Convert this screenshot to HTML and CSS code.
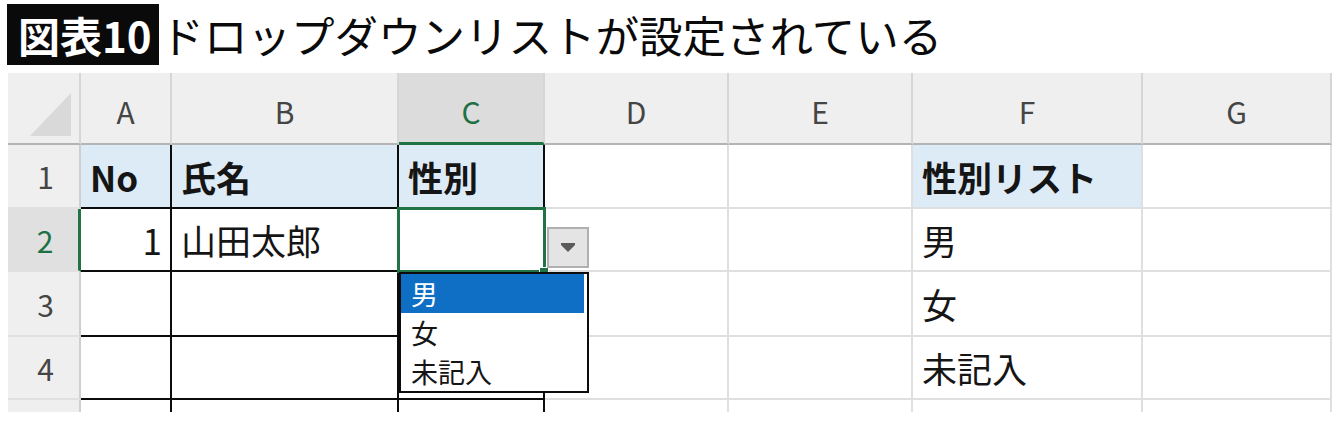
FILE: index.html
```html
<!DOCTYPE html>
<html lang="ja">
<head>
<meta charset="utf-8">
<title>図表10</title>
<link rel="stylesheet" href="styles.css">
</head>
<body>
<div class="title">
  <span class="badge">図表10</span><span class="heading">ドロップダウンリストが設定されている</span>
</div>
<div class="sheet">
  <div class="grid">
    <div class="hd corner"><span class="tri"></span></div>
    <div class="hd col">A</div>
    <div class="hd col">B</div>
    <div class="hd col sel-col">C</div>
    <div class="hd col">D</div>
    <div class="hd col">E</div>
    <div class="hd col">F</div>
    <div class="hd col">G</div>

    <div class="hd row">1</div>
    <div class="c blk blue bold">No</div>
    <div class="c blk blue bold">氏名</div>
    <div class="c blk blue bold">性別</div>
    <div class="c"></div>
    <div class="c"></div>
    <div class="c blue bold">性別リスト</div>
    <div class="c"></div>

    <div class="hd row sel-row">2</div>
    <div class="c blk num">1</div>
    <div class="c blk">山田太郎</div>
    <div class="c blk"></div>
    <div class="c"></div>
    <div class="c"></div>
    <div class="c">男</div>
    <div class="c"></div>

    <div class="hd row">3</div>
    <div class="c blk"></div>
    <div class="c blk"></div>
    <div class="c blk"></div>
    <div class="c"></div>
    <div class="c"></div>
    <div class="c">女</div>
    <div class="c"></div>

    <div class="hd row">4</div>
    <div class="c blk"></div>
    <div class="c blk"></div>
    <div class="c blk"></div>
    <div class="c"></div>
    <div class="c"></div>
    <div class="c">未記入</div>
    <div class="c"></div>

    <div class="hd row last"></div>
    <div class="c blkv last"></div>
    <div class="c blkv last"></div>
    <div class="c blkv last"></div>
    <div class="c last"></div>
    <div class="c last"></div>
    <div class="c last"></div>
    <div class="c last"></div>
  </div>

  <div class="selection"><span class="handle"></span></div>
  <div class="dd-button"><svg width="16" height="10" viewBox="0 0 16 10"><rect x="1" y="0" width="14" height="2" fill="#5a5a5a"/><path d="M1 2 L15 2 L8 9 Z" fill="#5a5a5a"/></svg></div>
  <ul class="dd-list">
    <li class="active">男</li>
    <li>女</li>
    <li>未記入</li>
  </ul>
</div>
</body>
</html>
```

FILE: styles.css
```css
html, body {
  margin: 0;
  padding: 0;
  background: #ffffff;
}

body {
  width: 1340px;
  height: 430px;
  overflow: hidden;
  font-family: "Noto Sans CJK JP", "Noto Sans", sans-serif;
  color: #111;
}

.title {
  display: flex;
  align-items: center;
  margin: 4px 0 0 7px;
  height: 61px;
}

.badge {
  display: flex;
  align-items: center;
  height: 61px;
  padding: 0 7px 0 11px;
  background: #0a0a0a;
  color: #ffffff;
  font-size: 42px;
  font-weight: 700;
  line-height: 1;
}

.heading {
  margin-left: 2px;
  font-size: 43.5px;
  font-weight: 400;
  line-height: 1;
  color: #0a0a0a;
}

.sheet {
  position: relative;
  margin: 8px 0 0 8px;
  width: 1324px;
}

.grid {
  display: grid;
  grid-template-columns: 73px 91px 227px 146px 184px 184px 230px 189px;
  grid-template-rows: 72px 64px 63px 65px 63px 12px;
}

.hd {
  box-sizing: border-box;
  background: #efefef;
  color: #454545;
  display: flex;
  align-items: center;
  justify-content: center;
  font-size: 30px;
  font-weight: 400;
}

.col {
  border-right: 2px solid #d6d6d6;
  border-bottom: 2px solid #b4b4b4;
  padding-top: 6px;
}

.corner {
  position: relative;
  border-right: 2px solid #d6d6d6;
  border-bottom: 2px solid #b4b4b4;
}

.tri {
  position: absolute;
  right: 8px;
  bottom: 7px;
  width: 0;
  height: 0;
  border-left: 41px solid transparent;
  border-bottom: 43px solid #d9d9d9;
}

.row {
  border-right: 2px solid #cfcfcf;
  border-bottom: 2px solid #e0e0e0;
  padding-left: 4px;
}

.row.last {
  border-bottom: none;
}

.sel-col {
  background: #dcdcdc;
  color: #1e7145;
  border-bottom: 3px solid #217346;
}

.sel-row {
  background: #e0e0e0;
  color: #1e7145;
  border-right: 3px solid #217346;
}

.c {
  box-sizing: border-box;
  border-right: 2px solid #dfdfdf;
  border-bottom: 2px solid #dfdfdf;
  display: flex;
  align-items: center;
  padding: 0 8px 0 9px;
  font-size: 35px;
  font-weight: 400;
  color: #151515;
  white-space: nowrap;
}

.c.last {
  border-bottom: none;
}

.blk {
  border-right-color: #0c0c0c;
  border-bottom-color: #0c0c0c;
}

.blkv {
  border-right-color: #0c0c0c;
}

.blue {
  background: #ddebf7;
}

.bold {
  font-weight: 700;
}

.num {
  justify-content: flex-end;
}

.selection {
  position: absolute;
  left: 389px;
  top: 134px;
  width: 149px;
  height: 66px;
  box-sizing: border-box;
  border: 3px solid #217346;
}

.handle {
  position: absolute;
  right: -6px;
  bottom: -6px;
  width: 8px;
  height: 7px;
  background: #217346;
  border: 1px solid #ffffff;
}

.dd-button {
  position: absolute;
  left: 539px;
  top: 154px;
  width: 42px;
  height: 41px;
  box-sizing: border-box;
  background: #e4e4e4;
  border: 2px solid #b0b0b0;
  display: flex;
  align-items: center;
  justify-content: center;
}

.dd-list {
  position: absolute;
  left: 391px;
  top: 199px;
  width: 190px;
  height: 121px;
  box-sizing: border-box;
  margin: 0;
  padding: 0 3px 0 0;
  list-style: none;
  background: #ffffff;
  border: 2px solid #0c0c0c;
}

.dd-list li {
  height: 39px;
  display: flex;
  align-items: center;
  padding-left: 10px;
  font-size: 27px;
  line-height: 1;
  color: #151515;
}

.dd-list li.active {
  background: #0f6fc4;
  color: #ffffff;
}
```
